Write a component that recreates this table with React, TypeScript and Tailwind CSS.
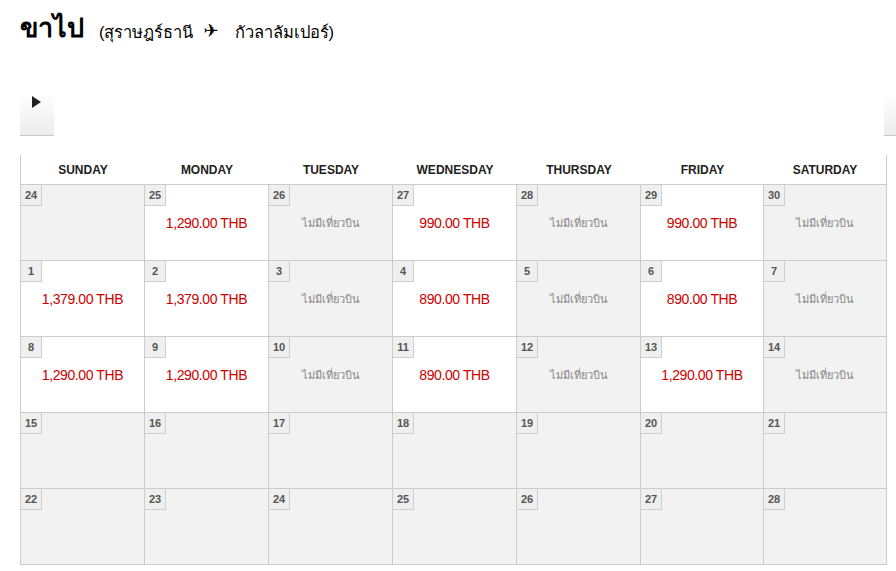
import React from "react";

type Cell = { d: number; kind: "price" | "none" | "empty"; price?: string };

const P = (d: number, price: string): Cell => ({ d, kind: "price", price });
const N = (d: number): Cell => ({ d, kind: "none" });
const E = (d: number): Cell => ({ d, kind: "empty" });

const rows: Cell[][] = [
  [E(24), P(25, "1,290.00 THB"), N(26), P(27, "990.00 THB"), N(28), P(29, "990.00 THB"), N(30)],
  [P(1, "1,379.00 THB"), P(2, "1,379.00 THB"), N(3), P(4, "890.00 THB"), N(5), P(6, "890.00 THB"), N(7)],
  [P(8, "1,290.00 THB"), P(9, "1,290.00 THB"), N(10), P(11, "890.00 THB"), N(12), P(13, "1,290.00 THB"), N(14)],
  [E(15), E(16), E(17), E(18), E(19), E(20), E(21)],
  [E(22), E(23), E(24), E(25), E(26), E(27), E(28)],
];

const days = ["SUNDAY", "MONDAY", "TUESDAY", "WEDNESDAY", "THURSDAY", "FRIDAY", "SATURDAY"];

export default function App() {
  return (
    <div
      className="w-[896px] h-[571px] bg-white overflow-hidden text-black"
      style={{ fontFamily: '"Liberation Sans", Arial, "Noto Sans", "DejaVu Sans", sans-serif' }}
    >
      <div className="flex items-end pl-[20px] pt-[7px] h-[42px]">
        <span className="text-[27px] font-bold leading-none">ขาไป</span>
        <span className="ml-[15px] text-[16.5px] leading-none mb-[2px] flex items-end">
          <span>(สุราษฎร์ธานี</span>
          <span className="ml-[10px] mr-[16px] text-[18px]">✈</span>
          <span>กัวลาลัมเปอร์)</span>
        </span>
      </div>
      <div className="flex justify-between mt-[51px] pl-[20px] mr-[-22px]">
        <div className="w-[34px] h-[43px] bg-gradient-to-b from-white to-[#ececec] border-b border-[#c8c8c8] flex justify-center pt-[3px]">
          <svg width="9" height="12" viewBox="0 0 9 12" className="ml-[-1px]">
            <polygon points="0,0 9,6 0,12" fill="#222" />
          </svg>
        </div>
        <div className="w-[34px] h-[43px] bg-gradient-to-b from-white to-[#ececec] border-b border-[#c8c8c8]" />
      </div>
      <div className="ml-[20px] mt-[19px] w-[867px] border-l border-[#cccccc]">
        <div className="grid grid-cols-[124px_124px_124px_124px_124px_123px_123px] h-[30px] border-b border-[#cccccc]">
          {days.map((d, j) => (
            <div
              key={d}
              className={`flex items-center justify-center text-[12px] font-bold text-[#222] ${j === 6 ? "border-r border-[#cccccc]" : ""}`}
            >
              {d}
            </div>
          ))}
        </div>
        {rows.map((r, i) => (
          <div key={i} className="grid grid-cols-[124px_124px_124px_124px_124px_123px_123px] h-[76px] border-b border-[#cccccc]">
            {r.map((c, j) => (
              <div
                key={j}
                className={`relative flex items-center justify-center border-r border-[#cccccc] ${
                  c.kind === "price" ? "bg-white" : "bg-[#f2f2f2]"
                }`}
              >
                <div className="absolute left-0 top-0 w-[21px] h-[21px] bg-[#efefef] border-r border-b border-[#cfcfcf] flex items-center justify-center text-[11px] font-bold text-[#555]">
                  {c.d}
                </div>
                {c.kind === "price" && (
                  <span className="text-[14px] tracking-[-0.4px] text-[#cc0000] mt-[2px]">{c.price}</span>
                )}
                {c.kind === "none" && (
                  <span className="text-[11px] text-[#888] mt-[2px]">ไม่มีเที่ยวบิน</span>
                )}
              </div>
            ))}
          </div>
        ))}
      </div>
    </div>
  );
}
